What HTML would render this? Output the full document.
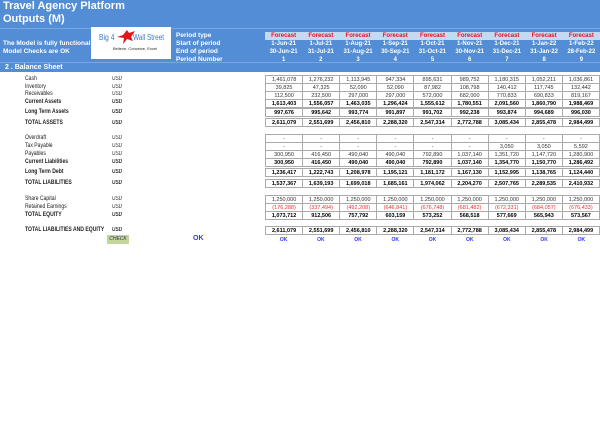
<!DOCTYPE html>
<html><head><meta charset="utf-8"><style>
*{margin:0;padding:0;box-sizing:border-box}
body{width:600px;height:425px;background:#fff;position:relative;overflow:hidden;font-family:"Liberation Sans",sans-serif}
.hdr{position:absolute;left:0;top:0;width:600px;height:72px;background:#538dd5}
.t{position:absolute;color:#fff;font-weight:bold;font-size:11px;left:3px;line-height:13px}
.w{position:absolute;color:#fff;font-weight:bold;font-size:6.5px;line-height:8px}
.lbl{position:absolute;left:25px;font-size:6.5px;color:#222;transform:scaleX(0.78);transform-origin:left;white-space:nowrap;line-height:8px}
.b{font-weight:bold}
.usd{position:absolute;left:112px;font-size:6px;font-style:italic;color:#333;transform:scaleX(0.8);transform-origin:left;line-height:8px}
table{position:absolute;left:265px;width:335px;border-collapse:collapse;table-layout:fixed}
td{border:1px solid #aaa;height:8px;font-size:5.5px;text-align:center;color:#333;line-height:6px;padding:0}
tr.bd td{font-weight:bold;color:#000}
table.box{border:1.5px solid #666}
.r td{color:#e33}
.hc{position:absolute;left:265px;width:335px;display:flex}
.hc div{flex:1;text-align:center;color:#fff;font-weight:bold;font-size:6px;line-height:8px}
.ok{position:absolute;top:236px;width:335px;left:265px;display:flex}
.ok div{flex:1;text-align:center;color:#33f;font-weight:bold;font-size:5px;line-height:8px}
</style></head><body>
<div class="hdr"></div>
<div class="t" style="top:0px">Travel Agency Platform</div>
<div class="t" style="top:13px">Outputs (M)</div>
<div style="position:absolute;left:0;top:28px;width:600px;height:1px;background:#7ba6de"></div>
<div style="position:absolute;left:0;top:62px;width:600px;height:1px;background:#7ba6de"></div>
<div style="position:absolute;left:265px;top:32px;width:335px;height:8px;background:#c5d9f1"></div>
<div style="position:absolute;left:91px;top:27px;width:80px;height:32px;background:#fff"></div>
<div style="position:absolute;left:99px;top:33px;font-size:8px;color:#3a7bc8;transform:scaleX(0.85);transform-origin:left">Big 4</div>
<svg style="position:absolute;left:115px;top:29px" width="22" height="16" viewBox="0 0 22 16"><path d="M2 8 L8 6 L12 1 L14 4 L20 2 L16 8 L18 12 L12 10 L8 15 L9 9 Z" fill="#e0161e"/></svg>
<div style="position:absolute;left:133px;top:33px;font-size:8px;color:#3a7bc8;transform:scaleX(0.8);transform-origin:left;white-space:nowrap">Wall Street</div>
<div style="position:absolute;left:113px;top:46px;font-size:4px;color:#222">Believe, Conceive, Excel</div>
<div class="w" style="left:3px;top:40px">The Model is fully functional</div>
<div class="w" style="left:3px;top:48px">Model Checks are OK</div>
<div class="w" style="left:5px;top:64px;font-size:7px">2 . Balance Sheet</div>
<div class="w" style="left:176px;top:32px">Period type</div>
<div class="w" style="left:176px;top:40px">Start of period</div>
<div class="w" style="left:176px;top:48px">End of period</div>
<div class="w" style="left:176px;top:56px">Period Number</div>
<div class="hc" style="top:32px"><div style="color:#e0161e">Forecast</div><div style="color:#e0161e">Forecast</div><div style="color:#e0161e">Forecast</div><div style="color:#e0161e">Forecast</div><div style="color:#e0161e">Forecast</div><div style="color:#e0161e">Forecast</div><div style="color:#e0161e">Forecast</div><div style="color:#e0161e">Forecast</div><div style="color:#e0161e">Forecast</div></div>
<div class="hc" style="top:40px"><div>1-Jun-21</div><div>1-Jul-21</div><div>1-Aug-21</div><div>1-Sep-21</div><div>1-Oct-21</div><div>1-Nov-21</div><div>1-Dec-21</div><div>1-Jan-22</div><div>1-Feb-22</div></div>
<div class="hc" style="top:48px"><div>30-Jun-21</div><div>31-Jul-21</div><div>31-Aug-21</div><div>30-Sep-21</div><div>31-Oct-21</div><div>30-Nov-21</div><div>31-Dec-21</div><div>31-Jan-22</div><div>28-Feb-22</div></div>
<div class="hc" style="top:56px"><div>1</div><div>2</div><div>3</div><div>4</div><div>5</div><div>6</div><div>7</div><div>8</div><div>9</div></div>

<div class="lbl" style="top:75px">Cash</div><div class="usd" style="top:75px">USD</div>
<div class="lbl" style="top:83px">Inventory</div><div class="usd" style="top:83px">USD</div>
<div class="lbl" style="top:90px">Receivables</div><div class="usd" style="top:90px">USD</div>
<div class="lbl b" style="top:98px">Current Assets</div><div class="usd b" style="top:98px">USD</div>
<div class="lbl b" style="top:108px">Long Term Assets</div><div class="usd b" style="top:108px">USD</div>
<div class="lbl b" style="top:119px">TOTAL ASSETS</div><div class="usd b" style="top:119px">USD</div>
<div class="lbl" style="top:134px">Overdraft</div><div class="usd" style="top:134px">USD</div>
<div class="lbl" style="top:142px">Tax Payable</div><div class="usd" style="top:142px">USD</div>
<div class="lbl" style="top:150px">Payables</div><div class="usd" style="top:150px">USD</div>
<div class="lbl b" style="top:158px">Current Liabilities</div><div class="usd b" style="top:158px">USD</div>
<div class="lbl b" style="top:168px">Long Term Debt</div><div class="usd b" style="top:168px">USD</div>
<div class="lbl b" style="top:179px">TOTAL LIABILITIES</div><div class="usd b" style="top:179px">USD</div>
<div class="lbl" style="top:195px">Share Capital</div><div class="usd" style="top:195px">USD</div>
<div class="lbl" style="top:203px">Retained Earnings</div><div class="usd" style="top:203px">USD</div>
<div class="lbl b" style="top:211px">TOTAL EQUITY</div><div class="usd b" style="top:211px">USD</div>
<div class="lbl b" style="top:226px">TOTAL LIABILITIES AND EQUITY</div><div class="usd b" style="top:226px">USD</div>
<div style="position:absolute;left:107px;top:235px;width:22px;height:9px;background:#c4d79b;font-size:5px;font-style:italic;text-align:center;line-height:9px;color:#333">CHECK</div>
<div style="position:absolute;left:193px;top:235px;font-size:7px;font-weight:bold;color:#33f">OK</div>

<table class="box" style="top:75px"><tr><td>1,461,078</td><td>1,276,232</td><td>1,113,945</td><td>947,334</td><td>895,631</td><td>989,752</td><td>1,180,315</td><td>1,052,211</td><td>1,036,861</td></tr>
<tr><td>39,825</td><td>47,325</td><td>52,090</td><td>52,090</td><td>87,982</td><td>108,798</td><td>140,412</td><td>117,745</td><td>132,442</td></tr>
<tr><td>112,500</td><td>232,500</td><td>297,000</td><td>297,000</td><td>572,000</td><td>682,000</td><td>770,833</td><td>690,833</td><td>819,167</td></tr>
<tr class="bd"><td>1,613,403</td><td>1,556,057</td><td>1,463,035</td><td>1,296,424</td><td>1,555,612</td><td>1,780,551</td><td>2,091,560</td><td>1,860,790</td><td>1,988,469</td></tr></table>
<table class="box" style="top:108px"><tr class="bd"><td>997,676</td><td>995,642</td><td>993,774</td><td>991,897</td><td>991,702</td><td>992,238</td><td>993,874</td><td>994,689</td><td>996,030</td></tr></table>
<table class="box" style="top:118px"><tr class="bd"><td>2,611,079</td><td>2,551,699</td><td>2,456,810</td><td>2,288,320</td><td>2,547,314</td><td>2,772,788</td><td>3,085,434</td><td>2,855,478</td><td>2,984,499</td></tr></table>

<table class="box" style="top:134px"><tr><td>-</td><td>-</td><td>-</td><td>-</td><td>-</td><td>-</td><td>-</td><td>-</td><td>-</td></tr>
<tr><td>-</td><td>-</td><td>-</td><td>-</td><td>-</td><td>-</td><td>3,050</td><td>3,050</td><td>5,592</td></tr>
<tr><td>300,950</td><td>416,450</td><td>490,040</td><td>490,040</td><td>792,890</td><td>1,037,140</td><td>1,351,720</td><td>1,147,720</td><td>1,280,900</td></tr>
<tr class="bd"><td>300,950</td><td>416,450</td><td>490,040</td><td>490,040</td><td>792,890</td><td>1,037,140</td><td>1,354,770</td><td>1,150,770</td><td>1,286,492</td></tr></table>
<table class="box" style="top:168px"><tr class="bd"><td>1,236,417</td><td>1,222,743</td><td>1,208,978</td><td>1,195,121</td><td>1,181,172</td><td>1,167,130</td><td>1,152,995</td><td>1,138,765</td><td>1,124,440</td></tr></table>
<table class="box" style="top:179px"><tr class="bd"><td>1,537,367</td><td>1,639,193</td><td>1,699,018</td><td>1,685,161</td><td>1,974,062</td><td>2,204,270</td><td>2,507,765</td><td>2,289,535</td><td>2,410,932</td></tr></table>

<table class="box" style="top:195px"><tr><td>1,250,000</td><td>1,250,000</td><td>1,250,000</td><td>1,250,000</td><td>1,250,000</td><td>1,250,000</td><td>1,250,000</td><td>1,250,000</td><td>1,250,000</td></tr>
<tr class="r"><td>(176,288)</td><td>(337,494)</td><td>(492,208)</td><td>(646,841)</td><td>(676,748)</td><td>(681,482)</td><td>(672,331)</td><td>(684,057)</td><td>(676,433)</td></tr>
<tr class="bd"><td>1,073,712</td><td>912,506</td><td>757,792</td><td>603,159</td><td>573,252</td><td>568,518</td><td>577,669</td><td>565,943</td><td>573,567</td></tr></table>
<table class="box" style="top:226px"><tr class="bd"><td>2,611,079</td><td>2,551,699</td><td>2,456,810</td><td>2,288,320</td><td>2,547,314</td><td>2,772,788</td><td>3,085,434</td><td>2,855,478</td><td>2,984,499</td></tr></table>
<div class="ok"><div>OK</div><div>OK</div><div>OK</div><div>OK</div><div>OK</div><div>OK</div><div>OK</div><div>OK</div><div>OK</div></div>
</body></html>
